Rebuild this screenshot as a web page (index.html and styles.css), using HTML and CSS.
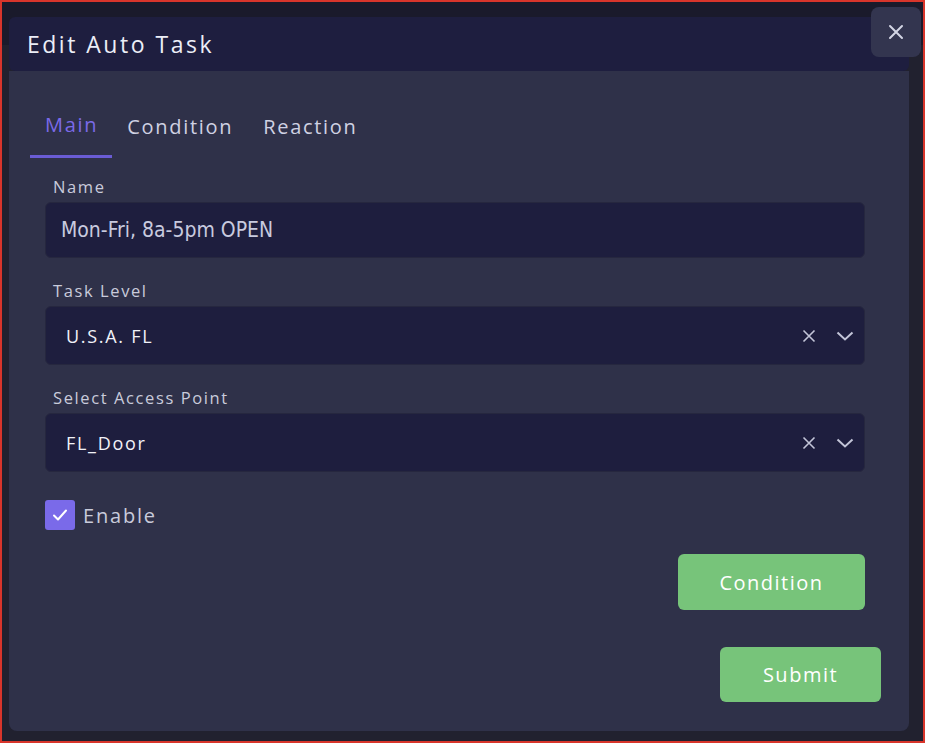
FILE: index.html
```html
<!DOCTYPE html>
<html lang="en">
<head>
  <meta charset="UTF-8">
  <meta name="viewport" content="width=device-width, initial-scale=1.0">
  <title>Edit Auto Task</title>
  <link rel="stylesheet" href="styles.css">
</head>
<body>
  <div class="screen">
    <div class="dialog">
      <div class="dialog-head">
        <h1>Edit Auto Task</h1>
      </div>
      <button class="close-btn" aria-label="Close">
        <svg width="16" height="16" viewBox="0 0 16 16"><path d="M2 2L14 14M14 2L2 14" stroke="#d3d5e4" stroke-width="2" stroke-linecap="round"/></svg>
      </button>
      <div class="dialog-body">
        <div class="tabs">
          <div class="tab active">Main</div>
          <div class="tab">Condition</div>
          <div class="tab">Reaction</div>
        </div>

        <div class="form">
          <label class="field-label">Name</label>
          <div class="input">Mon-Fri, 8a-5pm OPEN</div>

          <label class="field-label">Task Level</label>
          <div class="select">
            <span class="select-value">U.S.A. FL</span>
            <!-- clear + dropdown -->
            <svg class="clear" width="14" height="14" viewBox="0 0 14 14"><path d="M1.5 1.5L12.5 12.5M12.5 1.5L1.5 12.5" stroke="#c3c5d8" stroke-width="1.6"/></svg>
            <svg class="chev" width="18" height="10" viewBox="0 0 18 10"><path d="M1.5 1.5L9 8.5L16.5 1.5" fill="none" stroke="#c3c5d8" stroke-width="2"/></svg>
          </div>

          <label class="field-label">Select Access Point</label>
          <div class="select">
            <span class="select-value">FL_Door</span>
            <svg class="clear" width="14" height="14" viewBox="0 0 14 14"><path d="M1.5 1.5L12.5 12.5M12.5 1.5L1.5 12.5" stroke="#c3c5d8" stroke-width="1.6"/></svg>
            <svg class="chev" width="18" height="10" viewBox="0 0 18 10"><path d="M1.5 1.5L9 8.5L16.5 1.5" fill="none" stroke="#c3c5d8" stroke-width="2"/></svg>
          </div>

          <div class="check-row">
            <span class="checkbox">
              <svg width="16" height="14" viewBox="0 0 16 14"><path d="M2 7.5L6 11.5L14 2.5" fill="none" stroke="#ffffff" stroke-width="2" stroke-linecap="round" stroke-linejoin="round"/></svg>
            </span>
            <span class="check-text">Enable</span>
          </div>

          <div class="btn-row">
            <button class="btn btn-condition">Condition</button>
          </div>
        </div>

        <div class="submit-row">
          <button class="btn btn-submit">Submit</button>
        </div>
      </div>
    </div>
  </div>
</body>
</html>
```

FILE: styles.css
```css
html, body {
  margin: 0;
  padding: 0;
  height: 100%;
  font-family: "Open Sans", "DejaVu Sans", sans-serif;
}
.screen {
  box-sizing: border-box;
  width: 925px;
  height: 743px;
  border: 2px solid #d8352b;
  background: linear-gradient(#1a1a2b 0, #1a1a2b 43px, #21212f 43px);
  padding: 15px 0 0 7px;
  overflow: hidden;
}
.dialog {
  position: relative;
  width: 900px;
}
.dialog-head {
  height: 54px;
  background: #1e1e3f;
  border-radius: 6px;
  display: flex;
  align-items: center;
  padding-left: 18px;
  position: relative;
  z-index: 1;
}
.dialog-head h1 {
  margin: 0;
  font-size: 23px;
  font-weight: 400;
  color: #eceef7;
  letter-spacing: 2.5px;
}
.close-btn {
  position: absolute;
  top: -10px;
  right: -12px;
  width: 50px;
  height: 50px;
  border: none;
  border-radius: 8px;
  background: #33354f;
  display: flex;
  align-items: center;
  justify-content: center;
  padding: 0;
  z-index: 2;
}
.dialog-body {
  background: #2f3149;
  border-radius: 0 0 8px 8px;
  height: 660px;
  box-sizing: border-box;
  padding: 29px 0 0 21px;
  position: relative;
}
.tabs {
  display: flex;
}
.tab {
  padding: 12px 15px 13px;
  font-size: 20px;
  color: #cfd1e3;
  border-bottom: 3px solid transparent;
  line-height: 30px;
  letter-spacing: 1.7px;
}
.tab.active {
  color: #7b6ae8;
  border-bottom-color: #6a5cd4;
  padding-top: 10px;
  padding-bottom: 15px;
  padding-right: 14px;
}
.form {
  width: 820px;
  margin-left: 15px;
  padding-top: 17px;
}
.field-label {
  display: block;
  padding-left: 8px;
  font-size: 16.5px;
  line-height: 24px;
  color: #c9cbdb;
  margin-bottom: 3px;
  letter-spacing: 1.6px;
}
.input {
  box-sizing: border-box;
  height: 56px;
  background: #1e1e3e;
  border: 1px solid #26273f;
  border-radius: 6px;
  padding-left: 15px;
  display: flex;
  align-items: center;
  font-family: "DejaVu Sans Condensed", "DejaVu Sans", sans-serif;
  font-stretch: condensed;
  font-size: 21px;
  color: #c8cadf;
  margin-bottom: 21px;
}
.select {
  box-sizing: border-box;
  height: 59px;
  background: #1e1e3e;
  border: 1px solid #26273f;
  border-radius: 6px;
  padding: 0 10px 0 20px;
  display: flex;
  align-items: center;
  margin-bottom: 21px;
}
.select-value {
  flex: 1;
  font-size: 18px;
  color: #f1f2f8;
  letter-spacing: 1.7px;
}
.select .clear {
  margin-right: 20px;
}
.check-row {
  display: flex;
  align-items: center;
  gap: 8px;
  margin-top: 28px;
}
.checkbox {
  width: 30px;
  height: 30px;
  border-radius: 3px;
  background: #7a6ae9;
  display: flex;
  align-items: center;
  justify-content: center;
}
.check-text {
  font-size: 20px;
  color: #c9cbdb;
  letter-spacing: 1.8px;
}
.btn-row {
  display: flex;
  justify-content: flex-end;
  margin-top: 24px;
}
.btn {
  border: none;
  border-radius: 6px;
  background: #77c47a;
  color: #ffffff;
  font-family: "Open Sans", "DejaVu Sans", sans-serif;
  font-size: 20px;
  letter-spacing: 1.5px;
  padding: 0;
}
.btn-condition {
  width: 187px;
  height: 56px;
}
.submit-row {
  display: flex;
  justify-content: flex-end;
  padding-right: 28px;
  margin-top: 37px;
}
.btn-submit {
  width: 161px;
  height: 55px;
}
```
